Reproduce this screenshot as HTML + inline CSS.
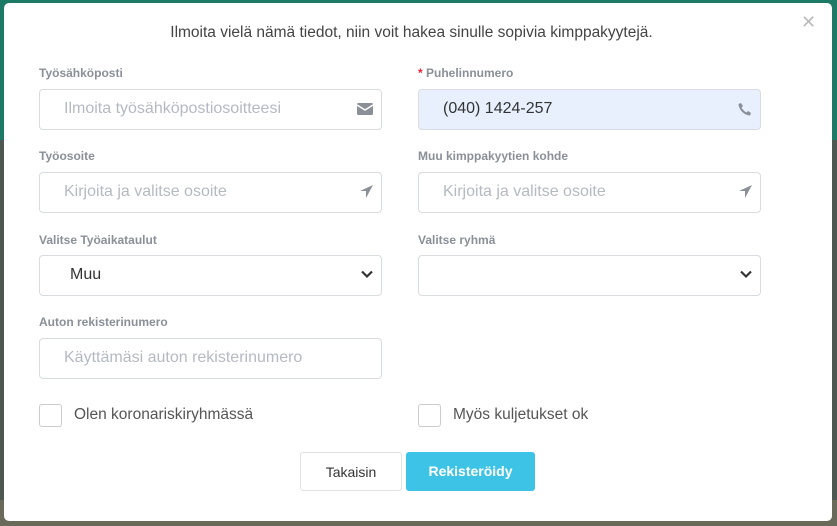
<!DOCTYPE html>
<html><head><meta charset="utf-8"><style>
*{box-sizing:border-box;margin:0;padding:0}
body{width:837px;height:526px;overflow:hidden;background:#4f5752;font-family:"Liberation Sans",sans-serif;position:relative}
.bgtop{position:absolute;left:0;top:0;width:837px;height:140px;background:#1d7a66}
.bgbot{position:absolute;left:0;top:500px;width:837px;height:26px;background:#6a6a5a}
.modal{position:absolute;left:4px;top:3px;width:828px;height:518px;background:#fff;border-radius:5px}
.title{position:absolute;top:24px;left:0;width:823px;text-align:center;font-size:15.5px;color:#444}
.close{position:absolute;left:801px;top:12px;font-size:18px;color:#bbb}
.lbl{position:absolute;font-size:12px;font-weight:bold;color:#8a8f98}
.lbl b{color:#e23}
.in{position:absolute;width:343px;height:41px;border:1px solid #d8dbe0;border-radius:4px;font-size:16px;color:#b5b9c2;padding:10px 0 0 24px}
.in.v{color:#333;background:#e8f0fe}
.ic{position:absolute;right:8px;top:12px}
.cb{position:absolute;width:23px;height:23px;border:1px solid #ccc;border-radius:3px}
.ct{position:absolute;font-size:15.5px;color:#555}
.btn{position:absolute;top:452px;height:39px;border-radius:3px;font-size:14px;text-align:center;line-height:39px}
</style></head><body>
<div class="bgtop"></div><div class="bgbot"></div>
<div class="modal"></div>
<div class="title">Ilmoita vielä nämä tiedot, niin voit hakea sinulle sopivia kimppakyytejä.</div>
<div class="close">✕</div>

<div class="lbl" style="left:39px;top:66px">Työsähköposti</div>
<div class="in" style="left:39px;top:89px">Ilmoita työsähköpostiosoitteesi<svg class="ic" width="16" height="14" viewBox="0 0 16 14"><rect x="0" y="1" width="16" height="12" rx="1.5" fill="#8a8f98"/><path d="M0 3l8 5 8-5" stroke="#fff" stroke-width="1.5" fill="none"/></svg></div>
<div class="lbl" style="left:418px;top:66px"><b>*</b> Puhelinnumero</div>
<div class="in v" style="left:418px;top:89px">(040) 1424-257<svg class="ic" width="14" height="14" viewBox="0 0 14 14"><path d="M3 1l2 3-1.5 1.5c1 2 3 4 5 5L10 9l3 2-1 2.5C6 13 1 8 0.5 2z" fill="#8a8f98"/></svg></div>

<div class="lbl" style="left:39px;top:149px">Työosoite</div>
<div class="in" style="left:39px;top:172px">Kirjoita ja valitse osoite<svg class="ic" width="13" height="13" viewBox="0 0 13 13"><path d="M13 0L0 6h6v7z" fill="#8a8f98"/></svg></div>
<div class="lbl" style="left:418px;top:149px">Muu kimppakyytien kohde</div>
<div class="in" style="left:418px;top:172px">Kirjoita ja valitse osoite<svg class="ic" width="13" height="13" viewBox="0 0 13 13"><path d="M13 0L0 6h6v7z" fill="#8a8f98"/></svg></div>

<div class="lbl" style="left:39px;top:233px">Valitse Työaikataulut</div>
<div class="in" style="left:39px;top:255px;color:#333;padding-left:30px">Muu<svg class="ic" style="top:14px" width="12" height="9" viewBox="0 0 12 9"><path d="M1 1.5l5 5 5-5" stroke="#333" stroke-width="2.2" fill="none"/></svg></div>
<div class="lbl" style="left:418px;top:233px">Valitse ryhmä</div>
<div class="in" style="left:418px;top:255px"><svg class="ic" style="top:14px" width="12" height="9" viewBox="0 0 12 9"><path d="M1 1.5l5 5 5-5" stroke="#333" stroke-width="2.2" fill="none"/></svg></div>

<div class="lbl" style="left:39px;top:315px">Auton rekisterinumero</div>
<div class="in" style="left:39px;top:338px">Käyttämäsi auton rekisterinumero</div>

<div class="cb" style="left:39px;top:404px"></div><div class="ct" style="left:74px;top:406px">Olen koronariskiryhmässä</div>
<div class="cb" style="left:418px;top:404px"></div><div class="ct" style="left:453px;top:406px">Myös kuljetukset ok</div>

<div class="btn" style="left:300px;width:102px;border:1px solid #e2e2e2;color:#333">Takaisin</div>
<div class="btn" style="left:406px;width:129px;background:#3dc3e6;color:#fff;font-weight:bold">Rekisteröidy</div>
</body></html>
